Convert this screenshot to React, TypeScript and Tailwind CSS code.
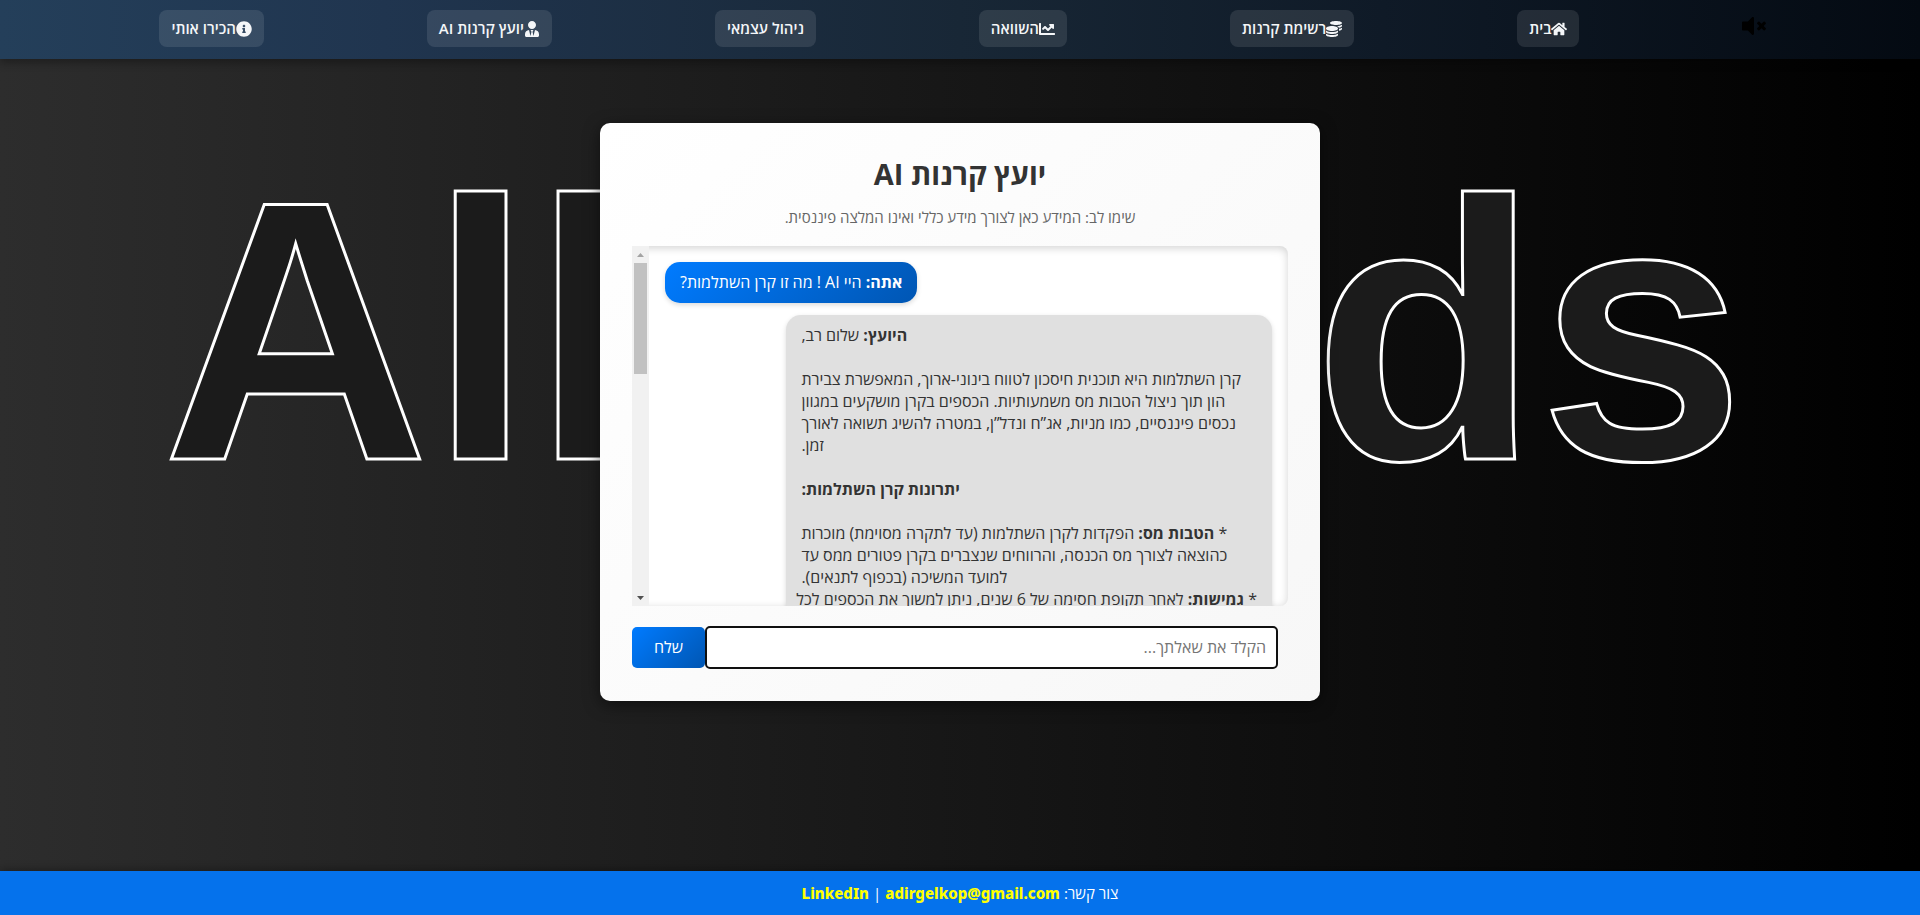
import React from "react";
import type { IconType } from "react-icons";
import {
  FaChartLine,
  FaCoins,
  FaHome,
  FaInfoCircle,
  FaUserTie,
  FaVolumeMute,
} from "react-icons/fa";

const navItems: { label: string; href: string; icon?: IconType }[] = [
  { label: "בית", href: "#home", icon: FaHome },
  { label: "רשימת קרנות", href: "#funds", icon: FaCoins },
  { label: "השוואה", href: "#compare", icon: FaChartLine },
  { label: "ניהול עצמאי", href: "#self" },
  { label: "יועץ קרנות AI", href: "#advisor", icon: FaUserTie },
  { label: "הכירו אותי", href: "#about", icon: FaInfoCircle },
];

function NavBar() {
  return (
    <header className="relative z-10 flex h-[59px] items-start justify-between bg-[linear-gradient(to_left,#040a12,#0f1a27_28%,#182736_50%,#20354f_80%,#243f5a)] pr-[8%] pl-[8.3%] pt-[10px] shadow-[0_4px_8px_rgba(0,0,0,0.3)]">
      <button type="button" aria-label="השתקה" className="mt-1 text-2xl leading-none text-black">
        <FaVolumeMute />
      </button>
      {navItems.map(({ label, href, icon: Icon }) => (
        <a
          key={href}
          href={href}
          className="flex h-[37px] items-center rounded-lg bg-white/10 px-3 text-[15px] font-semibold whitespace-nowrap text-[#f4f6f8]"
        >
          {Icon && <Icon className="text-base" />}
          <span>{label}</span>
        </a>
      ))}
    </header>
  );
}

function ScrollBar() {
  return (
    <div aria-hidden="true" className="flex w-[17px] shrink-0 flex-col items-center bg-[#f1f1f1]">
      <div className="flex h-[17px] items-center">
        <svg width="7" height="4" viewBox="0 0 7 4">
          <path d="M0 4 3.5 0 7 4z" fill="#a3a3a3" />
        </svg>
      </div>
      <div className="h-[111px] w-[13px] bg-[#c1c1c1]" />
      <div className="mt-auto flex h-[17px] items-center">
        <svg width="7" height="4" viewBox="0 0 7 4">
          <path d="M0 0h7L3.5 4z" fill="#505050" />
        </svg>
      </div>
    </div>
  );
}

function Messages() {
  return (
    <div className="flex h-[360px] overflow-hidden rounded-r-lg bg-white shadow-[inset_0_2px_8px_rgba(0,0,0,0.18)]">
      <div className="flex grow flex-col gap-3 p-4 text-left text-base leading-[22px]">
        <div className="self-end rounded-[15px] bg-[linear-gradient(135deg,#007bff,#0056b3)] px-[15px] py-[10px] leading-[21px] text-white shadow-[0_2px_5px_rgba(0,0,0,0.15)]">
          <b>אתה:</b> היי AI ! מה זו קרן השתלמות?
        </div>
        <div className="w-4/5 shrink-0 rounded-[15px] bg-[#e0e0e0] px-[15px] py-[9px] whitespace-nowrap text-[#333] shadow-[0_2px_5px_rgba(0,0,0,0.15)]">
          <b>היועץ:</b> שלום רב,
          <br />
          <br />
          קרן השתלמות היא תוכנית חיסכון לטווח בינוני-ארוך, המאפשרת צבירת
          <br />
          הון תוך ניצול הטבות מס משמעותיות. הכספים בקרן מושקעים במגוון
          <br />
          נכסים פיננסיים, כמו מניות, אג”ח ונדל”ן, במטרה להשיג תשואה לאורך
          <br />
          זמן.
          <br />
          <br />
          <b>יתרונות קרן השתלמות:</b>
          <br />
          <br />
          * <b>הטבות מס:</b> הפקדות לקרן השתלמות (עד לתקרה מסוימת) מוכרות
          <br />
          כהוצאה לצורך מס הכנסה, והרווחים שנצברים בקרן פטורים ממס עד
          <br />
          למועד המשיכה (בכפוף לתנאים).
          <br />
          * <b>גמישות:</b> לאחר תקופת חסימה של 6 שנים, ניתן למשוך את הכספים לכל
        </div>
      </div>
      <ScrollBar />
    </div>
  );
}

function ChatCard() {
  return (
    <section className="relative flex w-[720px] max-w-full flex-col rounded-[10px] bg-[linear-gradient(135deg,#ffffff,#f7f7f7)] p-8 shadow-[0_4px_16px_rgba(0,0,0,0.5)]">
      <h1 className="text-center text-[29px] leading-[38px] font-bold text-[#333]">יועץ קרנות AI</h1>
      <p className="mt-[14px] mb-[19px] text-center text-[15px] leading-5 text-[#666]">
        שימו לב: המידע כאן לצורך מידע כללי ואינו המלצה פיננסית.
      </p>
      <Messages />
      <form className="mt-5 flex pr-[10px]" onSubmit={(e) => e.preventDefault()}>
        <input
          type="text"
          aria-label="שאלה ליועץ"
          placeholder="הקלד את שאלתך..."
          className="h-[43px] min-w-0 grow rounded-[5px] border-2 border-[#101010] bg-white px-[10px] pb-[2px] text-base text-[#333] outline-none placeholder:text-[#757575]"
        />
        <button
          type="submit"
          className="my-px w-[73px] rounded-[5px] bg-[linear-gradient(135deg,#007bff,#0056b3)] pb-[2px] text-base font-medium text-white"
        >
          שלח
        </button>
      </form>
    </section>
  );
}

export default function App() {
  return (
    <div
      dir="rtl"
      className="relative flex min-h-screen flex-col overflow-hidden bg-[linear-gradient(to_left,#000,#2d2d2d)] font-['Open_Sans',sans-serif]"
    >
      <NavBar />
      <div
        aria-hidden="true"
        dir="ltr"
        className="absolute inset-x-0 top-[121px] pr-[13px] text-center font-['Liberation_Sans',Arial,sans-serif] text-[370px] leading-[420px] font-bold whitespace-nowrap text-[#1b1b1b] [-webkit-text-stroke:3px_white]"
      >
        AllFunds
      </div>
      <main className="flex grow justify-center pt-16">
        <div>
          <ChatCard />
        </div>
      </main>
      <footer className="relative flex h-11 items-center justify-center gap-1 bg-[#0572ec] text-[15px] font-medium text-white shadow-[0_-2px_8px_rgba(0,0,0,0.3)]">
        <span>צור קשר:</span>
        <a href="mailto:adirgelkop@gmail.com" className="font-['Noto_Sans',sans-serif] font-extrabold text-[#ffff00]">
          adirgelkop@gmail.com
        </a>
        <span>|</span>
        <a href="#linkedin" className="font-['Noto_Sans',sans-serif] font-extrabold text-[#ffff00]">
          LinkedIn
        </a>
      </footer>
    </div>
  );
}
